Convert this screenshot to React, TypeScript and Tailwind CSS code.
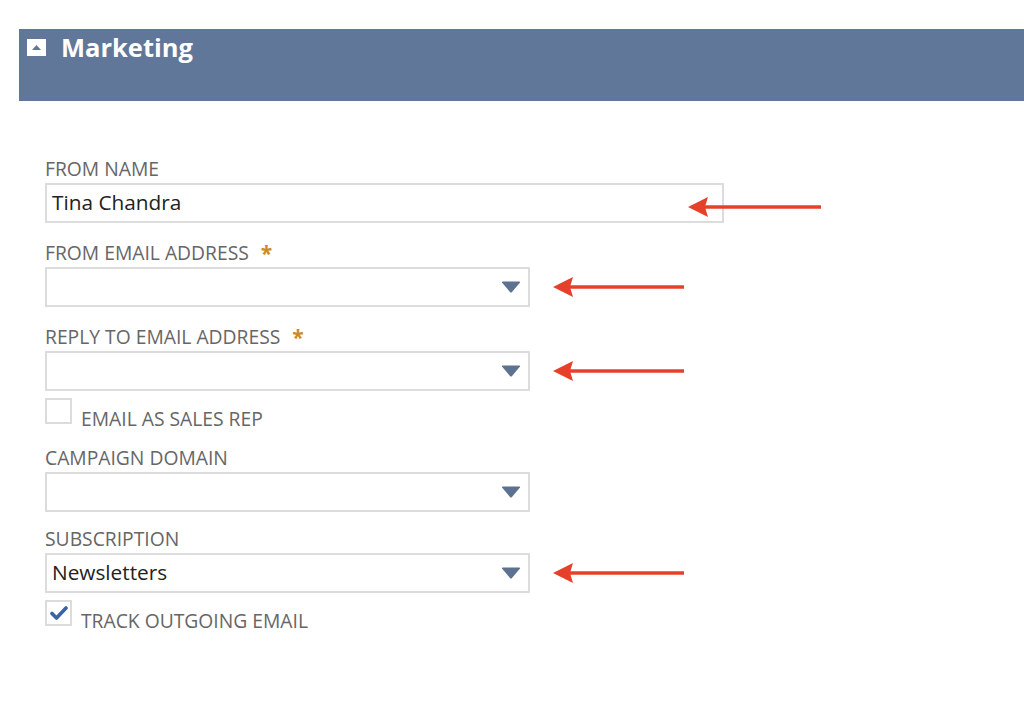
import React from 'react';

function Arrow({ width }: { width: number }) {
  return (
    <svg width={width} height={22} viewBox={`0 0 ${width} 22`}>
      <line x1={16} y1={11} x2={width - 1} y2={11} stroke="#e6402b" strokeWidth={3.4} />
      <polygon points="0,11 20,1 17,11 20,21" fill="#e6402b" />
    </svg>
  );
}

function Caret() {
  return (
    <svg width={20} height={12} viewBox="0 0 20 12">
      <path d="M1 1.5 Q0.5 0.5 2 0.5 L18 0.5 Q19.5 0.5 19 1.5 L11 11 Q10 12 9 11 Z" fill="#5d7191" />
    </svg>
  );
}

function Label({ text, required }: { text: string; required?: boolean }) {
  return (
    <div className="h-6 flex items-center text-[19.3px] text-[#666] leading-6">
      <span>{text}</span>
      {required && <span className="ml-3 text-[#cc8a22] font-bold text-[21px]">*</span>}
    </div>
  );
}

function Select({ value }: { value?: string }) {
  return (
    <div className="w-[485px] h-10 border-2 border-[#dcdcdc] bg-white flex items-center justify-between pl-[5px] pr-[7px] text-[20.8px] text-[#222]">
      <span>{value}</span>
      <Caret />
    </div>
  );
}

function Checkbox({ checked, text }: { checked?: boolean; text: string }) {
  return (
    <div className="flex items-end">
      <div className="w-[27px] h-[26px] border-2 border-[#dcdcdc] bg-white flex items-center justify-center">
        {checked && (
          <svg width={18} height={14} viewBox="0 0 18 14">
            <path d="M2 7.5 L6.5 12 L16 2" stroke="#3b62a6" strokeWidth={3.6} fill="none" strokeLinecap="round" strokeLinejoin="round" />
          </svg>
        )}
      </div>
      <span className="ml-[9px] text-[19.3px] text-[#666] leading-6 -mb-[7px]">{text}</span>
    </div>
  );
}

export default function App() {
  return (
    <div className="min-h-screen bg-white" style={{ fontFamily: '"Open Sans", "Liberation Sans", sans-serif' }}>
      <div className="pt-[29px] pl-[19px]">
        <div className="h-[72px] bg-[#607799] flex items-start pt-[9px] pl-[8px]">
          <div className="w-[19px] h-[17px] bg-white flex items-center justify-center mt-[1px]">
            <svg width={9} height={6} viewBox="0 0 9 6">
              <polygon points="0,5 4.5,0 9,5" fill="#607799" />
            </svg>
          </div>
          <span className="ml-[15px] text-white font-bold text-[25.5px] leading-[18px]">Marketing</span>
        </div>
      </div>

      <div className="pl-[45px] pt-[56px]">
        <Label text="FROM NAME" />
        <div className="relative mt-[2px] w-[679px]">
          <div className="h-10 border-2 border-[#dcdcdc] bg-white flex items-center pl-[5px] text-[20.8px] text-[#222]">
            Tina Chandra
          </div>
          <div className="absolute left-[643px] top-[13px]">
            <Arrow width={134} />
          </div>
        </div>

        <div className="mt-[18px]">
          <Label text="FROM EMAIL ADDRESS" required />
        </div>
        <div className="mt-[2px] flex items-center">
          <Select />
          <div className="ml-[23px]">
            <Arrow width={132} />
          </div>
        </div>

        <div className="mt-[18px]">
          <Label text="REPLY TO EMAIL ADDRESS" required />
        </div>
        <div className="mt-[2px] flex items-center">
          <Select />
          <div className="ml-[23px]">
            <Arrow width={132} />
          </div>
        </div>

        <div className="mt-[7px]">
          <Checkbox text="EMAIL AS SALES REP" />
        </div>

        <div className="mt-[22px]">
          <Label text="CAMPAIGN DOMAIN" />
        </div>
        <div className="mt-[2px]">
          <Select />
        </div>

        <div className="mt-[15px]">
          <Label text="SUBSCRIPTION" />
        </div>
        <div className="mt-[2px] flex items-center">
          <Select value="Newsletters" />
          <div className="ml-[23px]">
            <Arrow width={132} />
          </div>
        </div>

        <div className="mt-[7px]">
          <Checkbox checked text="TRACK OUTGOING EMAIL" />
        </div>
      </div>
    </div>
  );
}
